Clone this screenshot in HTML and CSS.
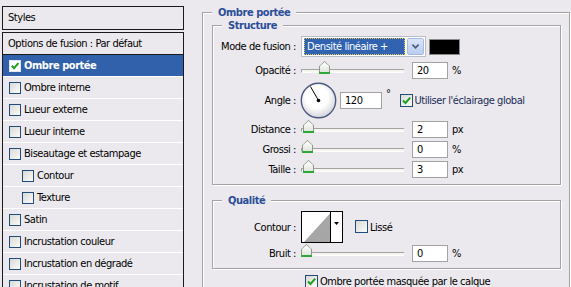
FILE: index.html
```html
<!DOCTYPE html>
<html lang="fr">
<head>
    <meta charset="UTF-8">
    <title>Style de calque - Ombre portée</title>
    <link rel="stylesheet" href="styles.css">
</head>
<body>
<div class="page">
    <aside class="styles-panel">
        <div class="styles-head">Styles</div>
        <ul class="effects">
            <li class="effect effect-default">Options de fusion : Par défaut</li>
            <li class="effect active">
                <span class="check"><svg viewBox="0 0 10 10"><path d="M1.8 4.8 L4 7.2 L8.4 2.2"/></svg></span>Ombre portée
            </li>
            <li class="effect"><span class="check"></span>Ombre interne</li>
            <li class="effect"><span class="check"></span>Lueur externe</li>
            <li class="effect"><span class="check"></span>Lueur interne</li>
            <li class="effect"><span class="check"></span>Biseautage et estampage</li>
            <li class="effect sub"><span class="check"></span>Contour</li>
            <li class="effect sub"><span class="check"></span>Texture</li>
            <li class="effect"><span class="check"></span>Satin</li>
            <li class="effect"><span class="check"></span>Incrustation couleur</li>
            <li class="effect"><span class="check"></span>Incrustation en dégradé</li>
            <li class="effect"><span class="check"></span>Incrustation de motif</li>
        </ul>
    </aside>

    <main class="options">
        <fieldset class="group group-outer">
            <legend>Ombre portée</legend>

            <fieldset class="group">
                <legend>Structure</legend>
                <div class="form-grid structure-grid">
                    <label>Mode de fusion :</label>
                    <div class="ctrl">
                        <div class="combo">
                            <span class="combo-value">Densité linéaire +</span>
                            <span class="combo-btn"><svg viewBox="0 0 14 17"><path d="M3.5 6.5 L7 10 L10.5 6.5"/></svg></span>
                        </div>
                        <span class="swatch"></span>
                    </div>

                    <label>Opacité :</label>
                    <div class="ctrl">
                        <div class="slider"><span class="thumb" style="left: 17px"></span></div>
                        <span class="num">20</span><span class="unit">%</span>
                    </div>

                    <label>Angle :</label>
                    <div class="ctrl">
                        <svg class="dial" viewBox="0 0 37 37">
                            <defs>
                                <radialGradient id="dialFill" cx="45%" cy="40%" r="60%">
                                    <stop offset="0.55" stop-color="#ffffff"/>
                                    <stop offset="1" stop-color="#d4d4dc"/>
                                </radialGradient>
                            </defs>
                            <circle cx="18.5" cy="18.5" r="17.2" fill="url(#dialFill)" stroke="#4b5a7e" stroke-width="1.4"/>
                            <line x1="18.5" y1="18.5" x2="10.5" y2="4.6" stroke="#000" stroke-width="1"/>
                            <circle cx="18.5" cy="18.5" r="1.8" fill="#000"/>
                        </svg>
                        <span class="num num-wide">120</span>
                        <span class="deg">°</span>
                        <span class="check check-lg"><svg viewBox="0 0 11 11"><path d="M2 5.5 L4.5 8 L9.2 2.6"/></svg></span>
                        <span class="check-label">Utiliser l'éclairage global</span>
                    </div>

                    <label>Distance :</label>
                    <div class="ctrl">
                        <div class="slider"><span class="thumb" style="left: 1px"></span></div>
                        <span class="num">2</span><span class="unit">px</span>
                    </div>

                    <label>Grossi :</label>
                    <div class="ctrl">
                        <div class="slider"><span class="thumb" style="left: 0px"></span></div>
                        <span class="num">0</span><span class="unit">%</span>
                    </div>

                    <label>Taille :</label>
                    <div class="ctrl">
                        <div class="slider"><span class="thumb" style="left: 1px"></span></div>
                        <span class="num">3</span><span class="unit">px</span>
                    </div>
                </div>
            </fieldset>

            <fieldset class="group group-quality">
                <legend>Qualité</legend>
                <div class="form-grid quality-grid">
                    <label>Contour :</label>
                    <div class="ctrl">
                        <svg class="contour" viewBox="0 0 42 32">
                            <rect x="0.5" y="0.5" width="41" height="31" fill="#fff" stroke="#000"/>
                            <polygon points="3,31 29.5,2 29.5,31" fill="#a6a6a6"/>
                            <line x1="29.5" y1="0.5" x2="29.5" y2="31.5" stroke="#000"/>
                            <polygon points="33,11 38,11 35.5,14" fill="#000"/>
                        </svg>
                        <span class="check check-lg check-smooth"></span>
                        <span class="check-label plain">Lissé</span>
                    </div>

                    <label>Bruit :</label>
                    <div class="ctrl">
                        <div class="slider"><span class="thumb" style="left: -1px"></span></div>
                        <span class="num">0</span><span class="unit">%</span>
                    </div>
                </div>
            </fieldset>

            <div class="knockout">
                <span class="check check-lg"><svg viewBox="0 0 11 11"><path d="M2 5.5 L4.5 8 L9.2 2.6"/></svg></span>
                <span class="check-label plain">Ombre portée masquée par le calque</span>
            </div>
        </fieldset>
    </main>
</div>
</body>
</html>
```

FILE: styles.css
```css
body {
    margin: 0;
    background: #ebe9ed;
    font-family: "DejaVu Sans Condensed", "Liberation Sans", Arial, sans-serif;
    font-size: 11px;
    letter-spacing: -0.45px;
    color: #000;
    overflow: hidden;
}
.page {
    display: flex;
    align-items: flex-start;
    padding: 6px 0 0 2px;
    height: 287px;
    box-sizing: border-box;
}

/* left list of effects */
.styles-panel {
    width: 182px;
    flex: none;
}
.styles-head {
    border: 1px solid #1a1a1a;
    height: 22px;
    line-height: 22px;
    padding-left: 5px;
}
.effects {
    list-style: none;
    margin: 2px 0 0;
    padding: 0;
    border: 1px solid #1a1a1a;
    border-bottom: none;
    height: 260px;
}
.effect {
    display: flex;
    align-items: center;
    height: 21px;
    padding-left: 6px;
    border-bottom: 1px solid #fff;
    white-space: nowrap;
}
.effect .check {
    margin-right: 3px;
}
.effect-default {
    padding-left: 5px;
    border-bottom-color: #1a1a1a;
}
.effect.active {
    background: #3261ab;
    color: #fff;
    font-weight: bold;
}
.effect.active .check {
    background: #fff;
    border-color: #dfe6f2;
}
.effect.sub {
    padding-left: 19px;
}

/* checkboxes */
.check {
    display: inline-flex;
    flex: none;
    width: 12px;
    height: 12px;
    box-sizing: border-box;
    border: 1px solid #1f4c7a;
    background: linear-gradient(135deg, #d9d9d4, #fbfbf9);
}
.check svg {
    width: 100%;
    height: 100%;
}
.check path {
    fill: none;
    stroke: #20a020;
    stroke-width: 2;
}
.check-lg {
    width: 13px;
    height: 13px;
}
.check-label {
    margin-left: 2px;
    color: #1a2b57;
    white-space: nowrap;
}
.check-label.plain {
    color: #000;
}

/* group boxes */
.options {
    margin-left: 18px;
    width: 368px;
    flex: none;
}
.group {
    margin: 0;
    padding: 0;
    border: 1px solid #a3a3a3;
    box-shadow: inset 1px 1px #fff, 1px 1px #fff;
    min-width: 0;
}
.group legend {
    margin-left: 9px;
    padding: 0 6px;
    line-height: 13px;
    font-weight: bold;
    color: #2b4e9a;
    background: #ebe9ed;
}
.group-outer {
    padding: 0 8px 0 9px;
    height: 300px;
    box-sizing: border-box;
}
.group-outer > legend {
    margin-left: 0;
}
.group-quality {
    margin-top: 9px;
}

.form-grid {
    display: grid;
    grid-template-columns: 83px auto;
    column-gap: 5px;
    align-items: center;
    padding-bottom: 5px;
}
.structure-grid {
    padding-top: 3px;
    grid-template-rows: 23px 24px 37px 20px 20px 20px;
}
.quality-grid {
    padding-top: 4px;
    grid-template-rows: 32px 20px;
}
.form-grid label {
    text-align: right;
    white-space: nowrap;
}
.ctrl {
    display: flex;
    align-items: center;
}

/* combo box */
.combo {
    display: flex;
    width: 125px;
    height: 21px;
    box-sizing: border-box;
    border: 1px solid #b8bfca;
    background: #fff;
    padding: 1px 1px 1px 2px;
}
.combo-value {
    flex: 1;
    background: #3163b0;
    color: #fff;
    border: 1px dotted #e9cd52;
    padding-left: 2px;
    line-height: 15px;
    white-space: nowrap;
}
.combo-btn {
    width: 15px;
    margin-left: 2px;
    border: 1px solid #a7bbe2;
    border-radius: 2px;
    background: linear-gradient(#dbe5f9, #b9cdf1);
}
.combo-btn svg {
    width: 100%;
    height: 100%;
}
.combo-btn path {
    fill: none;
    stroke: #4a5d80;
    stroke-width: 2;
}
.swatch {
    width: 31px;
    height: 16px;
    box-sizing: border-box;
    margin-left: 3px;
    background: #000;
    border: 1px solid #8a8a8a;
}

/* sliders */
.slider {
    position: relative;
    width: 103px;
    height: 4px;
    margin-top: 2px;
    box-sizing: border-box;
    border-top: 1px solid #a2a2a2;
    border-left: 1px solid #a2a2a2;
    border-bottom: 1px solid #fff;
    background: #f6f6f0;
}
.thumb {
    position: absolute;
    top: -9px;
    width: 11px;
    height: 13px;
    background:
        linear-gradient(#2fa83a, #2fa83a) bottom / 100% 2px no-repeat,
        linear-gradient(#8f9a8c, #8f9a8c);
    clip-path: polygon(50% 0, 100% 40%, 100% 100%, 0 100%, 0 40%);
}
.thumb::before {
    content: "";
    position: absolute;
    inset: 1px 1px 2px;
    clip-path: polygon(50% 0, 100% 40%, 100% 100%, 0 100%, 0 40%);
    background: linear-gradient(#ffffff, #dfe6da);
}
.num {
    width: 36px;
    height: 17px;
    box-sizing: border-box;
    margin-left: 8px;
    padding-left: 4px;
    line-height: 15px;
    border: 1px solid #a2a2a2;
    background: #fff;
}
.unit {
    margin-left: 4px;
}

/* angle */
.dial {
    width: 37px;
    height: 37px;
    margin-left: -1px;
}
.num-wide {
    width: 42px;
    margin-left: 3px;
}
.deg {
    margin-left: 4px;
    align-self: flex-start;
    margin-top: 5px;
}
.ctrl .check-lg {
    margin-left: 9px;
}

/* quality */
.contour {
    width: 42px;
    height: 32px;
}
.ctrl .check-smooth {
    margin-left: 12px;
    margin-top: -2px;
}
.knockout {
    display: flex;
    align-items: center;
    margin-top: 6px;
    padding-left: 93px;
    line-height: 13px;
}
```
